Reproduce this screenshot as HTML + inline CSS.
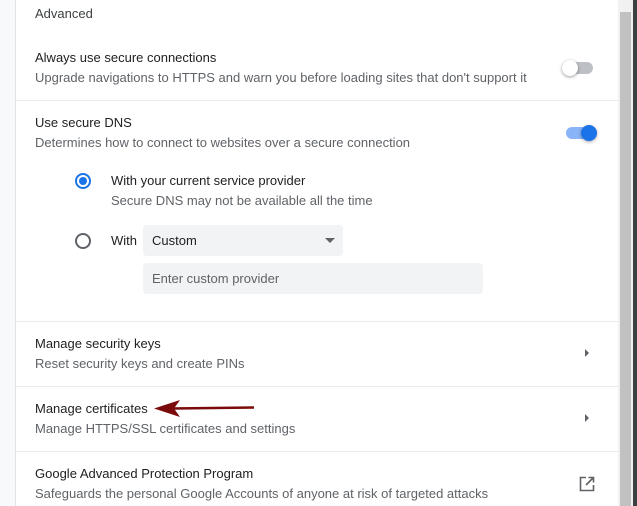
<!DOCTYPE html>
<html><head><style>
body{margin:0;width:637px;height:506px;overflow:hidden;background:#f8f9fa;font-family:"Liberation Sans",sans-serif;position:relative}
.card{position:absolute;left:15px;top:0;width:602px;height:506px;background:#fff;border-left:1px solid #e4e4e4;border-right:1px solid #e4e4e4}
.t{position:absolute;font-size:13px;color:#202124;white-space:nowrap}
.s{position:absolute;font-size:13px;color:#5f6368;white-space:nowrap}
.sep{position:absolute;left:16px;width:602px;height:1px;background:#e8eaed}
</style></head><body>
<div class="card"></div>
<div class="sep" style="top:100px"></div>
<div class="sep" style="top:321px"></div>
<div class="sep" style="top:386px"></div>
<div class="sep" style="top:451px"></div>
<div class="t" style="left:35px;top:6px;color:#3c4043">Advanced</div>
<div class="t" style="left:35px;top:50px">Always use secure connections</div>
<div class="s" style="left:35px;top:70px">Upgrade navigations to HTTPS and warn you before loading sites that don't support it</div>
<div style="position:absolute;left:566px;top:62px;width:27px;height:12px;border-radius:6px;background:#bdc1c6"></div>
<div style="position:absolute;left:562px;top:60px;width:16px;height:16px;border-radius:50%;background:#fff;box-shadow:0 1px 3px rgba(0,0,0,.4)"></div>
<div class="t" style="left:35px;top:115px">Use secure DNS</div>
<div class="s" style="left:35px;top:135px">Determines how to connect to websites over a secure connection</div>
<div style="position:absolute;left:566px;top:127px;width:26px;height:12px;border-radius:6px;background:#8ab4f8"></div>
<div style="position:absolute;left:581px;top:125px;width:16px;height:16px;border-radius:50%;background:#1a73e8;box-shadow:0 1px 3px rgba(0,0,0,.35)"></div>
<div style="position:absolute;left:75px;top:173px;width:12px;height:12px;border:2px solid #1a73e8;border-radius:50%"></div>
<div style="position:absolute;left:79px;top:177px;width:8px;height:8px;background:#1a73e8;border-radius:50%"></div>
<div class="t" style="left:111px;top:173px">With your current service provider</div>
<div class="s" style="left:111px;top:193px">Secure DNS may not be available all the time</div>
<div style="position:absolute;left:75px;top:233px;width:12px;height:12px;border:2px solid #5f6368;border-radius:50%"></div>
<div class="t" style="left:111px;top:233px">With</div>
<div style="position:absolute;left:143px;top:225px;width:200px;height:31px;background:#f1f3f4;border-radius:4px"></div>
<div class="t" style="left:152px;top:233px">Custom</div>
<div style="position:absolute;left:325px;top:238px;width:0;height:0;border-left:5px solid transparent;border-right:5px solid transparent;border-top:5px solid #5f6368"></div>
<div style="position:absolute;left:143px;top:263px;width:340px;height:31px;background:#f1f3f4;border-radius:4px"></div>
<div class="s" style="left:152px;top:271px">Enter custom provider</div>
<div class="t" style="left:35px;top:336px">Manage security keys</div>
<div class="s" style="left:35px;top:356px">Reset security keys and create PINs</div>
<div style="position:absolute;left:585px;top:349px;border-top:4px solid transparent;border-bottom:4px solid transparent;border-left:4px solid #5f6368"></div>
<div class="t" style="left:35px;top:401px">Manage certificates</div>
<div class="s" style="left:35px;top:421px">Manage HTTPS/SSL certificates and settings</div>
<div style="position:absolute;left:585px;top:414px;border-top:4px solid transparent;border-bottom:4px solid transparent;border-left:4px solid #5f6368"></div>
<svg style="position:absolute;left:150px;top:398px" width="110" height="22"><path d="M104 9.5 L22 10.5" stroke="#7b0a0a" stroke-width="2.5"/><path d="M4 10.5 L30 2 L24 10.5 L30 19 Z" fill="#7b0a0a"/></svg>
<div class="t" style="left:35px;top:466px">Google Advanced Protection Program</div>
<div class="s" style="left:35px;top:486px">Safeguards the personal Google Accounts of anyone at risk of targeted attacks</div>
<svg style="position:absolute;left:578px;top:475px" width="18" height="18" viewBox="0 0 18 18"><path d="M8 2.5H2.5V15.5H15.5V10" fill="none" stroke="#5f6368" stroke-width="1.6"/><path d="M10.5 2.5H15.5V7.5M15.5 2.5L8 10" fill="none" stroke="#5f6368" stroke-width="1.6"/></svg>
<div style="position:absolute;left:618px;top:0;width:15px;height:506px;background:#f1f1f1"></div>
<div style="position:absolute;left:620px;top:12px;width:11px;height:494px;background:#c1c1c1"></div>
<div style="position:absolute;left:633px;top:0;width:4px;height:506px;background:#3c4043"></div>
</body></html>
